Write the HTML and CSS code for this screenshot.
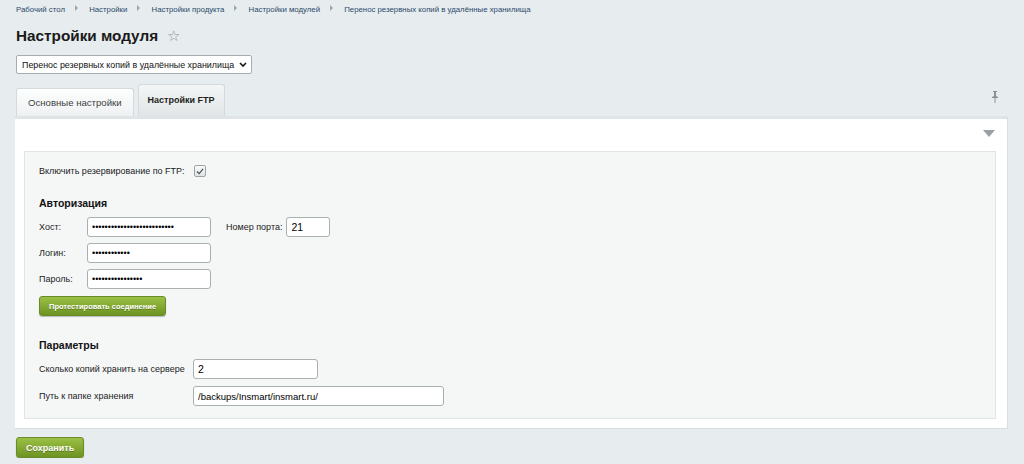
FILE: index.html
```html
<!DOCTYPE html>
<html lang="ru">
<head>
    <meta charset="UTF-8">
    <title>Настройки модуля</title>
    <link rel="stylesheet" href="styles.css">
</head>
<body>
    <div class="crumbs">
        <a href="#">Рабочий стол</a><span class="sep"></span>
        <a href="#">Настройки</a><span class="sep"></span>
        <a href="#">Настройки продукта</a><span class="sep"></span>
        <a href="#">Настройки модулей</a><span class="sep"></span>
        <a href="#">Перенос резервных копий в удалённые хранилища</a>
    </div>

    <h1 class="title">Настройки модуля <span class="star">&#9734;</span></h1>

    <div class="select-wrap">
        <select class="module-select">
            <option>Перенос резервных копий в удалённые хранилища</option>
        </select>
        <svg class="select-arrow" width="8" height="5" viewBox="0 0 8 5">
            <path d="M1 1l3 3 3-3" stroke="#111" stroke-width="1.6" fill="none"/>
        </svg>
    </div>

    <div class="tabs">
        <div class="tab">Основные настройки</div>
        <div class="tab active">Настройки FTP</div>
        <svg class="pin" width="8" height="12" viewBox="0 0 8 12">
            <path d="M2 0h4v1H5v4l2 1v1H4.5v5h-1V7H1V6l2-1V1H2z" fill="#8a9296"/>
        </svg>
    </div>

    <div class="panel">
        <div class="panel-head">
            <svg class="collapse" width="12" height="7" viewBox="0 0 12 7">
                <path d="M0 0h12L6 7z" fill="#9aa1a5"/>
            </svg>
        </div>
        <div class="box">
            <div class="check-row">
                <label>Включить резервирование по FTP:</label>
                <span class="checkbox">
                    <svg width="8" height="7" viewBox="0 0 9 8"><path d="M1 4l2.5 2.5L8 1" stroke="#4d5356" stroke-width="1.4" fill="none"/></svg>
                </span>
            </div>

            <h3 class="section">Авторизация</h3>
            <div class="auth">
                <label>Хост:</label>
                <div class="inline">
                    <input type="password" class="field w-host" value="abcdefghijklmnopqrstuvwxyz">
                    <label class="port-label">Номер порта:</label>
                    <input type="text" class="field w-port" value="21">
                </div>
                <label>Логин:</label>
                <input type="password" class="field w-host" value="abcdefghijkl">
                <label>Пароль:</label>
                <input type="password" class="field w-host" value="abcdefghijklmnop">
            </div>
            <button class="btn btn-small">Протестировать соединение</button>

            <h3 class="section params">Параметры</h3>
            <div class="params-grid">
                <label>Сколько копий хранить на сервере</label>
                <input type="text" class="field w-copies" value="2">
                <label>Путь к папке хранения</label>
                <input type="text" class="field w-path" value="/backups/Insmart/insmart.ru/">
            </div>
        </div>
    </div>

    <button class="btn btn-save">Сохранить</button>
</body>
</html>
```

FILE: styles.css
```css
body {
    margin: 0;
    padding: 0 16px;
    background: #e7ecee;
    font-family: "Liberation Sans", Arial, sans-serif;
    color: #000;
}
.crumbs {
    padding-top: 4px;
    height: 12px;
    font-size: 7.8px;
    line-height: 12px;
    white-space: nowrap;
}
.crumbs a {
    color: #2b4a6b;
    text-decoration: none;
}
.sep {
    display: inline-block;
    width: 0;
    height: 0;
    margin: 0 9px 1px 10px;
    border-left: 3px solid #9aa6ae;
    border-top: 3px solid transparent;
    border-bottom: 3px solid transparent;
}
.title {
    margin: 6px 0 0;
    height: 28px;
    font-size: 15.3px;
    line-height: 28px;
    font-weight: bold;
    color: #1b1b1b;
}
.star {
    margin-left: 5px;
    font-size: 15px;
    font-weight: normal;
    color: #8d959a;
}
.select-wrap {
    position: relative;
    width: 236px;
    margin-top: 5px;
}
.module-select {
    display: block;
    width: 236px;
    height: 19px;
    padding: 0 0 0 5px;
    appearance: none;
    font-family: "Liberation Sans", Arial, sans-serif;
    font-size: 8.9px;
    color: #111;
    background: #fff;
    border: 1px solid #a7adb0;
    border-radius: 2px;
}
.select-arrow {
    position: absolute;
    right: 5px;
    top: 7px;
    pointer-events: none;
}
.tabs {
    display: flex;
    align-items: flex-end;
    margin-top: 10px;
    height: 32px;
}
.tab {
    height: 28px;
    margin-right: 4px;
    padding: 0 11px;
    line-height: 28px;
    font-size: 9.6px;
    color: #3b3f42;
    background: linear-gradient(#fdfefe, #eef1f2);
    border: 1px solid #d3dadd;
    border-bottom: none;
    border-radius: 3px 3px 0 0;
    box-sizing: border-box;
}
.tab.active {
    height: 32px;
    padding: 0 9px;
    line-height: 30px;
    font-size: 9px;
    font-weight: bold;
    color: #1e1e1e;
    background: linear-gradient(#f4f6f6, #e0e5e7);
}
.pin {
    margin-left: auto;
    margin-right: 9px;
    margin-bottom: 13px;
}
.panel {
    width: 993px;
    margin-left: -1px;
    background: #fff;
    border-top: 3px solid #dfe4e6;
    border-right: 1px solid #d8dfe2;
    border-bottom: 1px solid #d8dfe2;
    padding: 0 11px 9px 9px;
    box-sizing: border-box;
}
.panel-head {
    height: 32px;
    display: flex;
    justify-content: flex-end;
    align-items: flex-start;
}
.collapse {
    margin-top: 11px;
    margin-right: 1px;
}
.box {
    background: #f5f7f7;
    border: 1px solid #dfe5e7;
    padding: 12px 14px 12px;
    font-size: 9px;
    color: #222;
}
.check-row {
    display: flex;
    align-items: center;
    height: 14px;
}
.checkbox {
    display: inline-flex;
    align-items: center;
    justify-content: center;
    width: 10px;
    height: 10px;
    margin-left: 9px;
    border: 1px solid #9da4a8;
    border-radius: 2px;
    background: linear-gradient(#fafafa, #e1e4e6);
}
.section {
    margin: 19px 0 8px;
    font-size: 10.5px;
    font-weight: bold;
    color: #111;
}
.section.params {
    margin-top: 23px;
}
.auth {
    display: grid;
    grid-template-columns: 48px auto;
    row-gap: 6px;
    align-items: center;
}
.inline {
    display: flex;
    align-items: center;
}
.port-label {
    margin: 0 4px 0 15px;
}
.field {
    height: 20px;
    padding: 0 4px;
    font-family: "Liberation Sans", Arial, sans-serif;
    font-size: 9px;
    color: #000;
    background: #fff;
    border: 1px solid #a9b0b3;
    border-radius: 3px;
    box-sizing: border-box;
}
.w-host { width: 124px; }
.w-port { width: 44px; font-size: 10.5px; }
.w-copies { width: 125px; font-size: 10.5px; }
.w-path { width: 251px; font-size: 9.5px; }
.btn {
    display: block;
    color: #fff;
    font-family: "Liberation Sans", Arial, sans-serif;
    font-weight: bold;
    background: linear-gradient(#9cc045, #6d9422);
    border: 1px solid #6a8c28;
    border-radius: 3px;
    box-shadow: 0 1px 1px rgba(0, 0, 0, 0.25);
    text-shadow: 0 1px 0 rgba(0, 0, 0, 0.3);
    cursor: pointer;
}
.btn-small {
    margin-top: 7px;
    height: 20px;
    padding: 0 9px;
    font-size: 7.5px;
}
.params-grid {
    display: grid;
    grid-template-columns: 154px auto;
    row-gap: 7px;
    align-items: center;
    justify-items: start;
}
.btn-save {
    margin-top: 8px;
    height: 21px;
    padding: 0 9px;
    font-size: 9px;
}
```
